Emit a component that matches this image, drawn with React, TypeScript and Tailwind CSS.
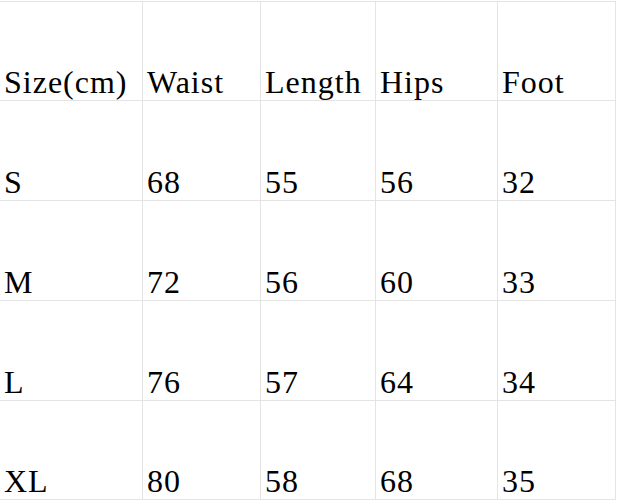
import React from 'react';

const widths = ['w-[143px]', 'w-[118px]', 'w-[115px]', 'w-[122px]', 'w-[118px]'];

const rows = [
  { h: 'h-[99px]', cells: ['Size(cm)', 'Waist', 'Length', 'Hips', 'Foot'] },
  { h: 'h-[100px]', cells: ['S', '68', '55', '56', '32'] },
  { h: 'h-[100px]', cells: ['M', '72', '56', '60', '33'] },
  { h: 'h-[100px]', cells: ['L', '76', '57', '64', '34'] },
  { h: 'h-[99px]', cells: ['XL', '80', '58', '68', '35'] },
];

export default function App() {
  return (
    <div className="w-[617px] h-[501px] bg-white pt-[1px] overflow-hidden">
      <div
        className="w-[616px] border-t border-[#e4e4e4] text-black text-[32px] leading-[32px] tracking-[1px]"
        style={{ fontFamily: '"Liberation Serif", "Noto Serif", serif' }}
      >
        {rows.map((row, i) => (
          <div key={i} className={`flex ${row.h}`}>
            {row.cells.map((c, j) => (
              <div
                key={j}
                className={`${widths[j]} shrink-0 flex items-end border-r border-b border-[#e4e4e4] pl-[4px] pb-[2px] whitespace-nowrap`}
              >
                {c}
              </div>
            ))}
          </div>
        ))}
      </div>
    </div>
  );
}
